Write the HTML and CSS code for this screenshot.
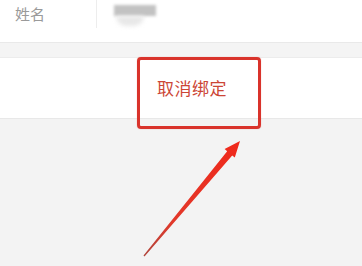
FILE: index.html
```
<!DOCTYPE html>
<html lang="zh">
<head>
<meta charset="utf-8">
<link rel="stylesheet" href="styles.css">
</head>
<body>
<div class="page">
  <div class="row">
    <span class="label">姓名</span>
    <span class="divider"></span>
    <span class="value"><span class="blur-a"></span><span class="blur-b"></span></span>
  </div>
  <div class="gap"></div>
  <div class="action">
    <span class="action-text">取消绑定</span>
  </div>
  <div class="rest"></div>
  <div class="highlight"></div>
  <svg class="arrow" width="362" height="266" viewBox="0 0 362 266">
    <defs>
      <linearGradient id="g" x1="144" y1="256" x2="240" y2="141" gradientUnits="userSpaceOnUse">
        <stop offset="0" stop-color="#b0463c"/>
        <stop offset="0.3" stop-color="#e2382a"/>
        <stop offset="1" stop-color="#f0281a"/>
      </linearGradient>
    </defs>
    <polygon fill="url(#g)" points="240,141 234.8,157.5 232.2,155.4 144.5,256.4 143.5,255.6 227.2,151.2 224.6,149.1"/>
  </svg>
</div>
</body>
</html>
```
FILE: styles.css
```
html, body {
  margin: 0;
  padding: 0;
}
body {
  background: #f3f3f3;
  font-family: "Noto Sans CJK SC", "Noto Sans", sans-serif;
}
.page {
  position: relative;
  width: 362px;
  height: 266px;
  overflow: hidden;
  display: flex;
  flex-direction: column;
}
.row {
  height: 42px;
  background: #fff;
  display: flex;
  align-items: flex-start;
  flex-shrink: 0;
}
.label {
  margin-left: 15px;
  margin-top: 3px;
  font-size: 15px;
  line-height: 22px;
  color: #9a9a9a;
  width: 81px;
}
.divider {
  width: 1px;
  height: 28px;
  background: #ededed;
}
.value {
  position: relative;
  margin-left: 15px;
  width: 50px;
  height: 30px;
}
.blur-a {
  position: absolute;
  left: 2px;
  top: 5px;
  width: 42px;
  height: 11px;
  background: #c2c2c2;
  filter: blur(1.5px);
}
.blur-b {
  position: absolute;
  left: 4px;
  top: 16px;
  width: 28px;
  height: 10px;
  background: #e8e8e8;
  border-radius: 0 0 14px 14px;
  filter: blur(2px);
}
.gap {
  height: 14px;
  background: #f4f4f4;
  border-top: 1px solid #e9e9e9;
  border-bottom: 1px solid #ececec;
  flex-shrink: 0;
}
.action {
  height: 60px;
  background: #fff;
  border-bottom: 1px solid #e8e8e8;
  display: flex;
  align-items: center;
  flex-shrink: 0;
}
.action-text {
  margin-left: 157px;
  font-size: 17px;
  line-height: 20px;
  color: #cc4636;
  letter-spacing: 0.5px;
}
.rest {
  flex: 1;
  background: #f3f3f3;
}
.highlight {
  position: absolute;
  left: 137px;
  top: 57px;
  width: 118px;
  height: 66px;
  border: 3px solid #d9332b;
  border-radius: 4px;
  box-shadow: 0 0 1px rgba(217, 51, 43, 0.5);
}
.arrow {
  position: absolute;
  left: 0;
  top: 0;
}
```
